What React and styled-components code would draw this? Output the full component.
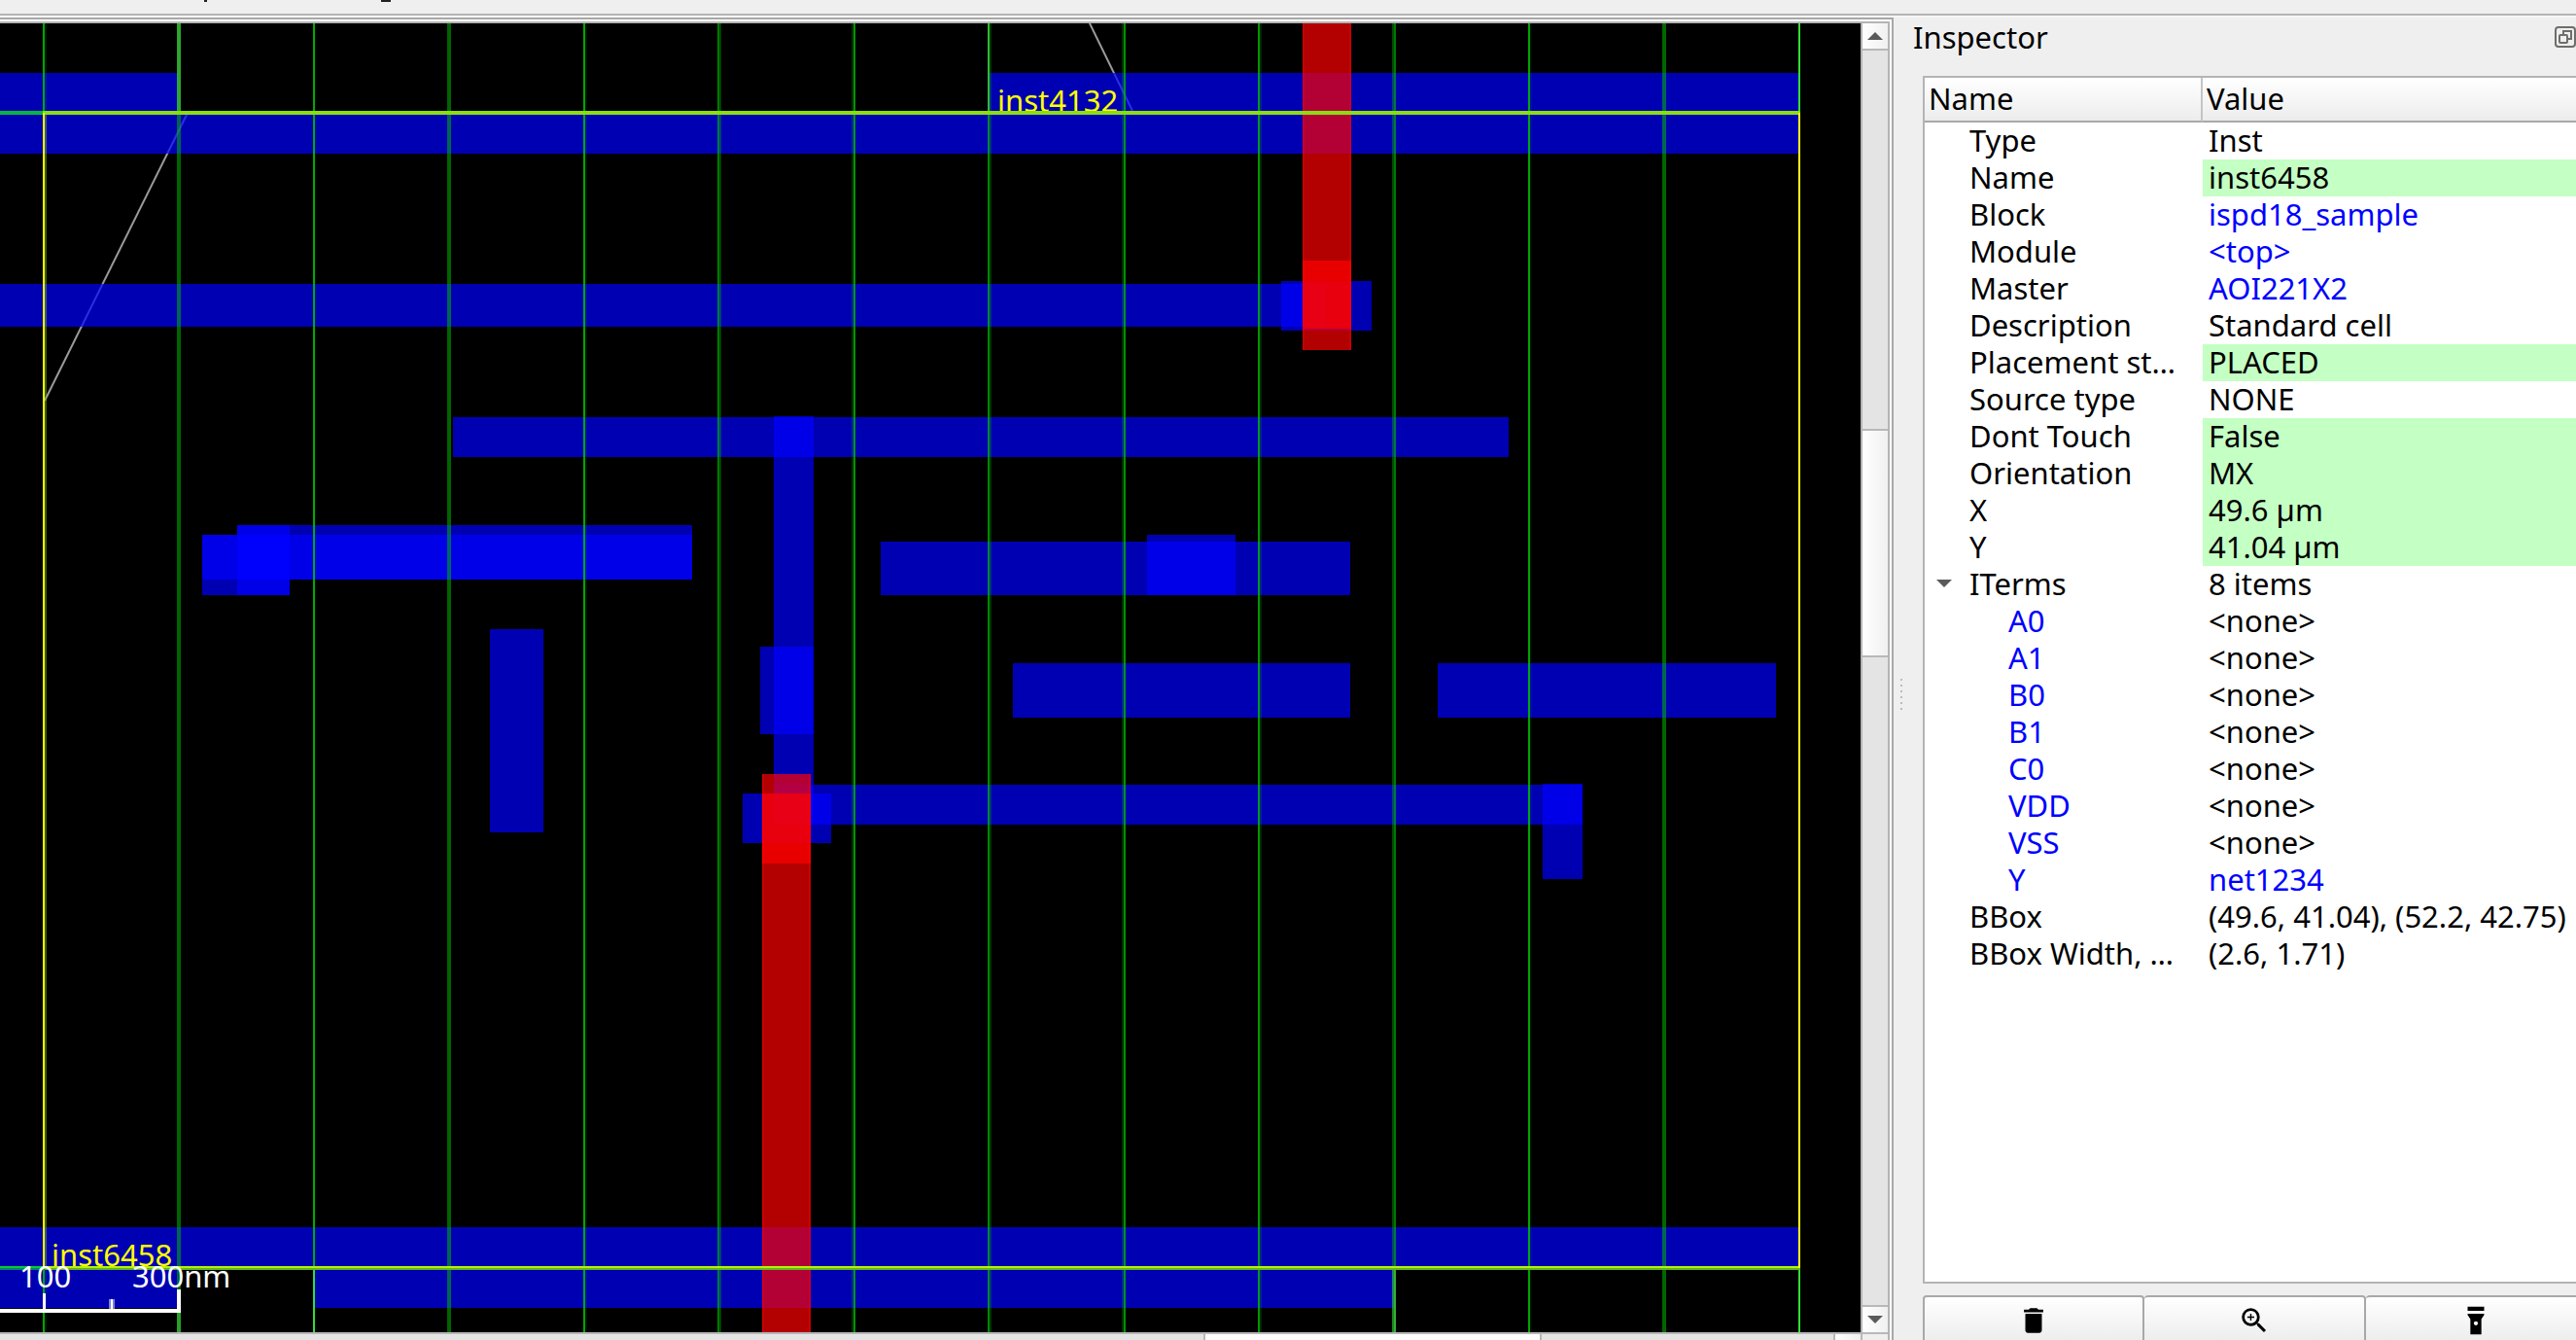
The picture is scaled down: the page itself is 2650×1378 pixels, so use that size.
import React, { useState } from "react";
import styled, { createGlobalStyle } from "styled-components";
import { MdDelete, MdZoomIn, MdFlashlightOn } from "react-icons/md";

const FONT = '"Noto Sans", "Open Sans", sans-serif';

const GlobalStyle = createGlobalStyle`
  *, *::before, *::after { box-sizing: border-box; }
  body {
    margin: 0;
    overflow: hidden;
    background: #efefef;
    color: #000;
    font-family: ${FONT};
    font-size: 31px;
  }
`;

const Window = styled.div`
  display: flex;
  flex-direction: column;
  height: 100vh;
  overflow: hidden;
`;

const ToolbarEdge = styled.header`
  flex: none;
  height: 18px;
  background: #efefef;
  border-bottom: 2px solid #f6f6f6;
  box-shadow: inset 0 -2px 0 #b4b4b4;
  svg { display: block; }
`;

const Workspace = styled.div`
  flex: 1;
  min-height: 0;
  display: flex;
`;

const ViewFrame = styled.main`
  flex: 1;
  min-width: 0;
  display: flex;
  background: #fff;
  border: solid #a8a8a8;
  border-width: 2px 2px 0 0;
  padding: 2px 2px 0 0;
`;

const ViewBody = styled.div`
  flex: 1;
  min-width: 0;
  display: flex;
  flex-direction: column;
  border: solid #b4b4b4;
  border-width: 2px 2px 0 0;
`;

const ViewRow = styled.div`
  flex: 1;
  min-height: 0;
  display: flex;
`;

const Canvas = styled.section`
  flex: 1;
  min-width: 0;
  overflow: hidden;
  background: #000;
  svg { display: block; }
  text { font-family: ${FONT}; font-size: 31px; }
`;

const VScroll = styled.div`
  flex: 0 0 28px;
  display: flex;
  flex-direction: column;
  border-left: 2px solid #b4b4b4;
`;

const HScroll = styled.div`
  flex: 0 0 8px;
  display: flex;
  border-top: 2px solid #b8b8b8;
`;

const Track = styled.div`
  flex: ${(p) => p.$size} 1 0;
  background: #e4e4e4;
`;

const VThumb = styled.div`
  flex: ${(p) => p.$size} 1 0;
  background: linear-gradient(90deg, #fff, #f0f0f0);
  border: solid #b8b8b8;
  border-width: 2px 0;
`;

const HThumb = styled.div`
  flex: ${(p) => p.$size} 1 0;
  background: #fdfdfd;
  border: solid #b8b8b8;
  border-width: 0 2px;
`;

const StepButton = styled.button`
  flex: 0 0 28px;
  display: flex;
  align-items: center;
  justify-content: center;
  padding: 0;
  border: solid #b8b8b8;
  border-width: ${(p) => p.$edges};
  background: linear-gradient(90deg, #fff, #f0f0f0);
`;

const Corner = styled.div`
  flex: 0 0 28px;
  background: #efefef;
  border-left: 2px solid #b8b8b8;
`;

const Dock = styled.aside`
  flex: 0 0 702px;
  display: flex;
  overflow: hidden;
`;

const Splitter = styled.div`
  flex: 0 0 16px;
  display: flex;
  flex-direction: column;
  align-items: center;
  justify-content: center;
  gap: 4px;
  padding-top: 32px;
`;

const Dot = styled.span`
  width: 2px;
  height: 2px;
  background: #bcbcbc;
`;

const DockBody = styled.div`
  flex: 1;
  min-width: 0;
  display: flex;
  flex-direction: column;
`;

const DockTitle = styled.div`
  flex: none;
  display: flex;
  align-items: center;
  justify-content: space-between;
  padding: 0 0 20px 4px;
`;

const Title = styled.h2`
  margin: 0;
  font-size: 31px;
  font-weight: 400;
  line-height: 40px;
`;

const FloatButton = styled.button`
  display: flex;
  padding: 0;
  border: 0;
  background: none;
`;

const TreeBox = styled.div`
  flex: 1;
  min-height: 0;
  width: 740px;
  margin-left: 14px;
  background: #fff;
  border: 2px solid #b4b4b4;
  overflow: hidden;
`;

const Tree = styled.table`
  width: 100%;
  table-layout: fixed;
  border-collapse: separate;
  border-spacing: 0;
`;

const HeadCell = styled.th`
  width: ${(p) => p.$width || "auto"};
  height: 46px;
  padding: 0 4px 2px;
  border-bottom: 2px solid #a8a8a8;
  border-right: 2px solid #c4c4c4;
  background: linear-gradient(#fff, #f6f6f6 50%, #ececec);
  font-weight: 400;
  line-height: 42px;
  text-align: left;
`;

const NameCell = styled.td`
  padding: 0 18px 0 0;
`;

const NameLine = styled.div`
  display: flex;
  margin: -3px 0 -1px;
  line-height: 42px;
`;

const Indent = styled.span`
  flex: 0 0 ${(p) => (p.$child ? 86 : 46)}px;
  display: flex;
  align-items: center;
  padding-left: 12px;
`;

const Expander = styled.button`
  display: flex;
  padding: 0;
  border: 0;
  background: none;
`;

const Label = styled.span`
  min-width: 0;
  overflow: hidden;
  white-space: nowrap;
  text-overflow: ellipsis;
`;

const ValueCell = styled.td`
  padding: 0 0 2px 6px;
  line-height: 36px;
  white-space: nowrap;
  background: ${(p) => (p.$editable ? "#c4ffc4" : "transparent")};
`;

const Link = styled.a`
  color: #0000ff;
  text-decoration: none;
`;

const Actions = styled.div`
  flex: 0 0 46px;
  min-height: 0;
  display: flex;
  width: 740px;
  margin: 12px 0 0 14px;
`;

const ActionButton = styled.button`
  flex: 0 0 228px;
  height: 52px;
  display: flex;
  align-items: center;
  justify-content: center;
  padding: 0;
  border: 2px solid #a8a8a8;
  border-left-width: ${(p) => (p.$first ? "2px" : "0")};
  border-radius: 4px;
  background: linear-gradient(#fff, #ececec);
  color: #000;
  font-size: 34px;
`;

const LINES = [
  [44, 0.9, 0.15],
  [182, 0.54, 0.54],
  [322, 0.92, 0.04],
  [460, 0.54, 0.54],
  [600, 0.9, 0.1],
  [738, 0.66, 0.36],
  [876, 0.24, 0.8],
  [1016, 0.74, 0.28],
  [1154, 0.26, 0.78],
  [1294, 0.82, 0.2],
  [1432, 0.4, 0.66],
  [1572, 0.9, 0.08],
  [1710, 0.56, 0.56],
  [1850, 0.95, 0],
];

/* Metal 1 shapes: x1, y1, x2, y2 */
const METAL1 = [
  [0, 75, 183, 116],
  [1018, 75, 1850, 116],
  [0, 116, 1850, 158],
  [0, 292, 1364, 336],
  [1318, 289, 1411, 340],
  [466, 429, 1552, 470],
  [796, 428, 837, 848],
  [208, 550, 298, 612],
  [244, 540, 298, 612],
  [244, 540, 712, 596],
  [208, 550, 712, 596],
  [504, 647, 559, 856],
  [906, 557, 1389, 612],
  [1180, 550, 1271, 612],
  [782, 665, 837, 755],
  [1042, 682, 1389, 738],
  [1479, 682, 1827, 738],
  [796, 807, 1628, 848],
  [764, 816, 855, 867],
  [1587, 806, 1628, 904],
  [0, 1262, 1850, 1304],
  [0, 1304, 183, 1345],
  [323, 1304, 1434, 1345],
];

/* Metal 2 shapes */
const METAL2 = [
  [1340, 0, 1390, 338],
  [1340, 268, 1390, 360],
  [784, 796, 834, 888],
  [784, 816, 834, 1400],
];

const Box = ({ r, fill }) => (
  <rect x={r[0]} y={r[1]} width={r[2] - r[0]} height={r[3] - r[1]} fill={fill} />
);

function LayoutDrawing() {
  return (
    <svg width="1914" height="1346" viewBox="0 24 1914 1346" role="img" aria-label="Layout">
      <g stroke="#9a9a9a" strokeWidth="2">
        <line x1="46" y1="412" x2="193" y2="116" />
        <line x1="1120" y1="22" x2="1165" y2="114" />
      </g>
      {METAL1.map((r, i) => (
        <Box key={i} r={r} fill="rgba(0,0,255,.7)" />
      ))}
      {LINES.map(([x, a, b]) => (
        <g key={x} fill="#00b800">
          <rect x={x} y="24" width="2" height="1346" opacity={a} />
          <rect x={x + 2} y="24" width="2" height="1346" opacity={b} />
        </g>
      ))}
      {METAL2.map((r, i) => (
        <g key={i}>
          <Box r={r} fill="rgba(255,0,0,.7)" />
          <Box r={[r[0], r[1], r[0] + 2, r[3]]} fill="rgba(255,0,0,.3)" />
          <Box r={[r[2] - 2, r[1], r[2], r[3]]} fill="rgba(255,0,0,.3)" />
        </g>
      ))}
      <g fill="#33dd33">
        <Box r={[182, 24, 186, 114]} fill="rgba(80,220,80,.55)" />
        <Box r={[1016, 24, 1018, 114]} fill="rgba(80,220,80,.6)" />
        <Box r={[1850, 24, 1852, 116]} />
        <Box r={[182, 1350, 186, 1370]} fill="rgba(80,220,80,.5)" />
        <Box r={[322, 1306, 324, 1370]} />
        <Box r={[1432, 1306, 1434, 1370]} fill="rgba(80,220,80,.4)" />
        <Box r={[1434, 1306, 1436, 1370]} fill="rgba(80,220,80,.6)" />
        <Box r={[1850, 1306, 1852, 1370]} />
      </g>
      <text x="1026" y="115" fill="#ffff00">inst4132</text>
      <text x="53" y="1302" fill="#ffff00">inst6458</text>
      <Box r={[0, 114, 44, 118]} fill="#0ab440" />
      <Box r={[44, 114, 1852, 118]} fill="#8cdc14" />
      <Box r={[0, 1302, 44, 1304]} fill="#08cc30" />
      <Box r={[0, 1304, 44, 1306]} fill="#068070" />
      <Box r={[46, 1302, 1852, 1304]} fill="#b4f208" />
      <Box r={[46, 1304, 1852, 1306]} fill="#64b41e" />
      <Box r={[44, 116, 46, 1304]} fill="#f2ff00" />
      <Box r={[46, 118, 48, 1302]} fill="rgba(160,180,60,.4)" />
      <Box r={[1850, 116, 1852, 1304]} fill="#ffff20" />
      <g fill="#ffffff">
        <text x="20" y="1324">100</text>
        <text x="136" y="1324">300nm</text>
        <Box r={[0, 1346, 186, 1350]} />
        <Box r={[182, 1326, 186, 1346]} />
        <Box r={[44, 1330, 47, 1346]} />
        <Box r={[114, 1336, 116, 1346]} />
        <rect x="112" y="1336" width="6" height="10" opacity=".5" />
      </g>
    </svg>
  );
}

const Arrow = ({ up }) => (
  <svg width="16" height="8" viewBox="0 0 16 8" aria-hidden="true">
    <path d={up ? "M0 8 8 0 16 8Z" : "M0 0H16L8 8Z"} fill="#5a5a5a" />
  </svg>
);

const ROWS = [
  { name: "Type", value: "Inst" },
  { name: "Name", value: "inst6458", editable: true },
  { name: "Block", value: "ispd18_sample", link: true },
  { name: "Module", value: "<top>", link: true },
  { name: "Master", value: "AOI221X2", link: true },
  { name: "Description", value: "Standard cell" },
  { name: "Placement status", value: "PLACED", editable: true },
  { name: "Source type", value: "NONE" },
  { name: "Dont Touch", value: "False", editable: true },
  { name: "Orientation", value: "MX", editable: true },
  { name: "X", value: "49.6 µm", editable: true },
  { name: "Y", value: "41.04 µm", editable: true },
  { name: "ITerms", value: "8 items", group: true },
  { name: "A0", value: "<none>", child: true },
  { name: "A1", value: "<none>", child: true },
  { name: "B0", value: "<none>", child: true },
  { name: "B1", value: "<none>", child: true },
  { name: "C0", value: "<none>", child: true },
  { name: "VDD", value: "<none>", child: true },
  { name: "VSS", value: "<none>", child: true },
  { name: "Y", value: "net1234", child: true, link: true },
  { name: "BBox", value: "(49.6, 41.04), (52.2, 42.75)" },
  { name: "BBox Width, Height", value: "(2.6, 1.71)" },
];

function PropertyTree() {
  const [open, setOpen] = useState(true);
  return (
    <Tree>
      <thead>
        <tr>
          <HeadCell scope="col" $width="286px">Name</HeadCell>
          <HeadCell scope="col">Value</HeadCell>
        </tr>
      </thead>
      <tbody>
        {ROWS.filter((r) => open || !r.child).map((r, i) => (
          <tr key={i}>
            <NameCell>
              <NameLine>
                <Indent $child={r.child}>
                  {r.group && (
                    <Expander
                      type="button"
                      aria-label="Toggle ITerms"
                      aria-expanded={open}
                      onClick={() => setOpen(!open)}
                    >
                      <Arrow />
                    </Expander>
                  )}
                </Indent>
                <Label>{r.child ? <Link href="#">{r.name}</Link> : r.name}</Label>
              </NameLine>
            </NameCell>
            <ValueCell $editable={r.editable}>
              {r.link ? <Link href="#">{r.value}</Link> : r.value}
            </ValueCell>
          </tr>
        ))}
      </tbody>
    </Tree>
  );
}

export default function App() {
  return (
    <Window>
      <GlobalStyle />
      <ToolbarEdge>
        <svg width="420" height="2" aria-hidden="true">
          <rect x="210" width="3" height="2" fill="#222" />
          <rect x="392" width="10" height="2" fill="#222" />
        </svg>
      </ToolbarEdge>
      <Workspace>
        <ViewFrame>
          <ViewBody>
            <ViewRow>
              <Canvas>
                <LayoutDrawing />
              </Canvas>
              <VScroll>
                <StepButton type="button" aria-label="Scroll up" $edges="0 0 2px">
                  <Arrow up />
                </StepButton>
                <Track $size={390} />
                <VThumb $size={232} />
                <Track $size={668} />
                <StepButton type="button" aria-label="Scroll down" $edges="2px 0 0">
                  <Arrow />
                </StepButton>
              </VScroll>
            </ViewRow>
            <HScroll>
              <Track $size={1238} />
              <HThumb $size={344} />
              <Track $size={300} />
              <StepButton type="button" aria-label="Scroll right" $edges="0 0 0 2px" />
              <Corner />
            </HScroll>
          </ViewBody>
        </ViewFrame>
        <Dock>
          <Splitter>
            {[0, 1, 2, 3, 4, 5].map((n) => (
              <Dot key={n} />
            ))}
          </Splitter>
          <DockBody>
            <DockTitle>
              <Title>Inspector</Title>
              <FloatButton type="button" aria-label="Float panel">
                <svg width="22" height="22" viewBox="0 0 22 22" fill="none" stroke="#6e6e6a" strokeWidth="2" aria-hidden="true">
                  <rect x="1" y="1" width="20" height="20" rx="3" />
                  <path d="M9 8V5H17V13H14" />
                  <rect x="5" y="9" width="8" height="8" rx="1" />
                </svg>
              </FloatButton>
            </DockTitle>
            <TreeBox>
              <PropertyTree />
            </TreeBox>
            <Actions>
              <ActionButton type="button" aria-label="Delete" $first>
                <MdDelete />
              </ActionButton>
              <ActionButton type="button" aria-label="Zoom to">
                <MdZoomIn />
              </ActionButton>
              <ActionButton type="button" aria-label="Highlight">
                <MdFlashlightOn />
              </ActionButton>
            </Actions>
          </DockBody>
        </Dock>
      </Workspace>
    </Window>
  );
}
